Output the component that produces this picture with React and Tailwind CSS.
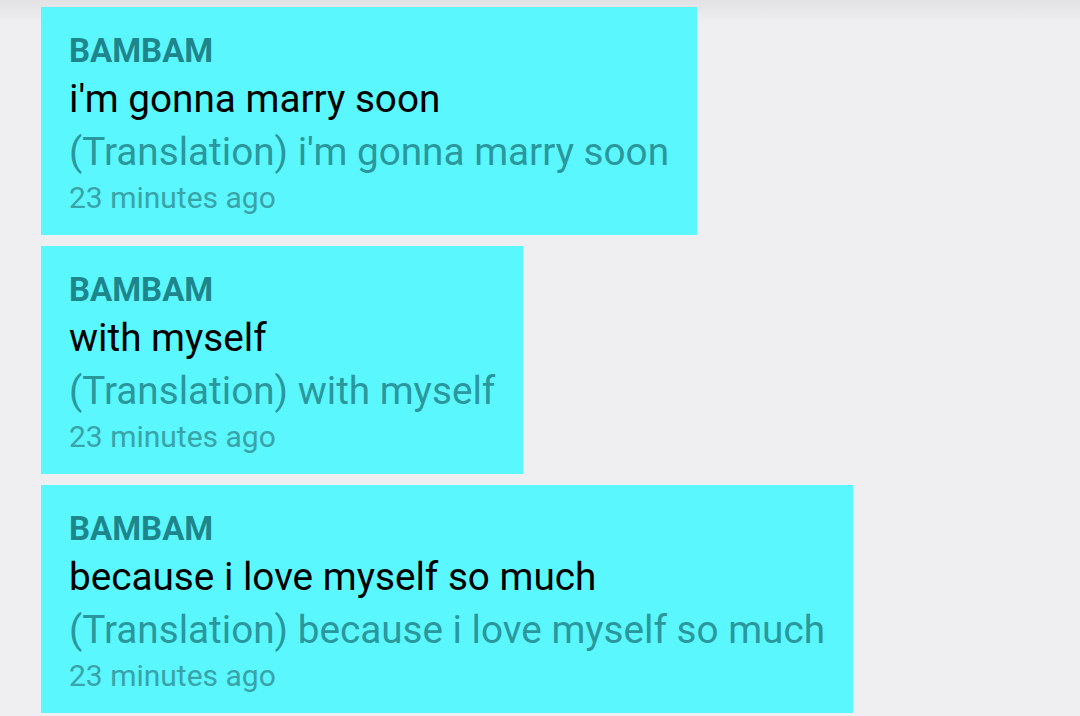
const messages = [
  { name: 'BAMBAM', text: "i'm gonna marry soon", time: '23 minutes ago' },
  { name: 'BAMBAM', text: 'with myself', time: '23 minutes ago' },
  { name: 'BAMBAM', text: 'because i love myself so much', time: '23 minutes ago' },
];

const Bubble = ({ msg }) => (
  <div className="bg-[#5af8fe] pl-7 pr-7 pt-[24px] h-[228px]" style={{ fontFamily: 'Roboto, sans-serif' }}>
    <div className="text-[33px] leading-[40px] font-bold text-[#1e868b]">{msg.name}</div>
    <div className="text-[38.7px] leading-[56px] text-black">{msg.text}</div>
    <div className="text-[38.7px] leading-[50px] text-[#2a979c]">(Translation) {msg.text}</div>
    <div className="text-[30px] leading-[42px] text-[#39a3a8]">{msg.time}</div>
  </div>
);

export default function App() {
  return (
    <div className="w-[1080px] h-[716px] overflow-hidden bg-[#efeff1] relative">
      <div className="absolute inset-x-0 top-0 h-[22px] bg-gradient-to-b from-[#e2e2e4] to-[#efeff1]" />
      <div className="relative flex flex-col items-start gap-[11px] pt-[7px] pl-[41px]">
        {messages.map((m, i) => (
          <Bubble key={i} msg={m} />
        ))}
      </div>
    </div>
  );
}
